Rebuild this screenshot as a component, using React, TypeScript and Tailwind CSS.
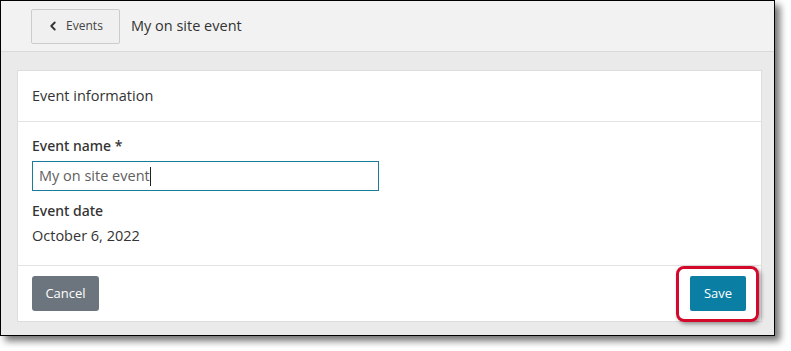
import { ChevronLeft } from "lucide-react";

const font = { fontFamily: '"Open Sans", "Noto Sans", sans-serif' };

const App: React.FC = () => {
    return (
        <div className="w-[791px] h-[351px] bg-white" style={font}>
            <div className="w-[775px] h-[336px] border border-black flex flex-col bg-[#eaeaea] shadow-[5px_5px_7px_rgba(0,0,0,0.55)]">
                {/* top bar */}
                <div className="h-[51px] shrink-0 flex items-center pl-[30px] bg-[#f2f2f2] border-b border-[#d9d9d9]">
                    <button className="w-[89px] h-[35px] flex items-center justify-center gap-[6px] border border-[#cccccc] rounded-[2px] bg-[#f0f0f0] text-[12px] text-[#444]">
                        <ChevronLeft size={14} strokeWidth={3.2} className="text-[#333] -ml-[2px]" />
                        <span>Events</span>
                    </button>
                    <span className="ml-[11px] text-[14.5px] text-[#333]">My on site event</span>
                </div>

                <div className="flex-1 pl-[16px] pr-[12px] pt-[18px] pb-[13px] flex">
                    <div className="relative flex-1 flex flex-col bg-white border border-[#dddddd]">
                        <div className="h-[51px] shrink-0 flex items-center px-[14px] border-b border-[#e3e3e3] text-[14.5px] text-[#333]">
                            Event information
                        </div>
                        <div className="flex-1 flex flex-col px-[14px] pt-[14px] text-[14.5px] leading-[20px] text-[#333]">
                            <label className="font-medium font-['Noto_Sans',sans-serif] text-[14px]">Event name *</label>
                            <div className="mt-[5px] w-[347px] h-[30px] border border-[#1b7c99] flex items-center px-[6px] text-[#5f5f5f]">
                                My on site event<span className="w-px h-[19px] bg-[#222]"></span>
                            </div>
                            <label className="mt-[10px] font-medium font-['Noto_Sans',sans-serif] text-[14px]">Event date</label>
                            <div className="mt-[5px]">October 6, 2022</div>
                        </div>
                        <div className="h-[56px] shrink-0 flex items-center justify-between pl-[14px] pr-[15px] border-t border-[#e3e3e3]">
                            <button className="w-[67px] h-[35px] rounded-[3px] bg-[#6c757d] text-white text-[13px]">Cancel</button>
                            <button className="w-[56px] h-[35px] rounded-[2px] bg-[#0b7ea4] text-white text-[13px]">Save</button>
                        </div>
                        <div className="absolute left-[658px] top-[195px] w-[83px] h-[56px] border-[3px] border-[#d2092a] rounded-[8px] shadow-[2px_2px_4px_rgba(0,0,0,0.4)]"></div>
                    </div>
                </div>
            </div>
        </div>
    );
};

export default App;
